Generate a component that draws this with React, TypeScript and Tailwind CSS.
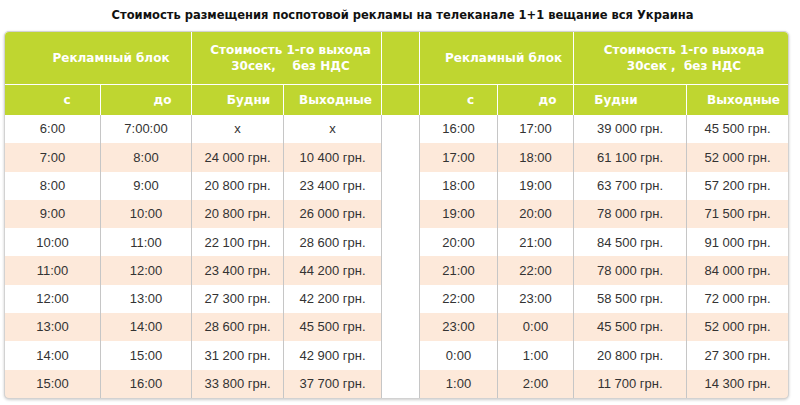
import React from 'react'

type Row = [string, string, string, string, string, string, string, string]

const rows: Row[] = [
  ['6:00', '7:00:00', 'x', 'x', '16:00', '17:00', '39 000 грн.', '45 500 грн.'],
  ['7:00', '8:00', '24 000 грн.', '10 400 грн.', '17:00', '18:00', '61 100 грн.', '52 000 грн.'],
  ['8:00', '9:00', '20 800 грн.', '23 400 грн.', '18:00', '19:00', '63 700 грн.', '57 200 грн.'],
  ['9:00', '10:00', '20 800 грн.', '26 000 грн.', '19:00', '20:00', '78 000 грн.', '71 500 грн.'],
  ['10:00', '11:00', '22 100 грн.', '28 600 грн.', '20:00', '21:00', '84 500 грн.', '91 000 грн.'],
  ['11:00', '12:00', '23 400 грн.', '44 200 грн.', '21:00', '22:00', '78 000 грн.', '84 000 грн.'],
  ['12:00', '13:00', '27 300 грн.', '42 200 грн.', '22:00', '23:00', '58 500 грн.', '72 000 грн.'],
  ['13:00', '14:00', '28 600 грн.', '45 500 грн.', '23:00', '0:00', '45 500 грн.', '52 000 грн.'],
  ['14:00', '15:00', '31 200 грн.', '42 900 грн.', '0:00', '1:00', '20 800 грн.', '27 300 грн.'],
  ['15:00', '16:00', '33 800 грн.', '37 700 грн.', '1:00', '2:00', '11 700 грн.', '14 300 грн.'],
]

// 9 columns, 1px grid lines come from the gap showing the row background
const cols = 'grid grid-cols-[95px_90px_91px_97px_37px_77px_75px_112px_101px] gap-x-px'

const hd = 'flex items-center justify-center text-center font-bold text-white bg-[#bfd630]'
const dc = 'flex items-center justify-center h-[28.3px]'

export default function App() {
  return (
    <div className="w-[800px] h-[405px] bg-white pt-[8px] font-['Liberation_Sans',Arial,sans-serif]">
      <h1 className="text-center text-[11.5px] font-bold text-[#111] leading-[14px] font-['DejaVu_Sans',Verdana,sans-serif] pl-[5px]">
        Стоимость размещения поспотовой рекламы на телеканале 1+1 вещание вся Украина
      </h1>

      <div className="ml-[4px] mt-[9px] w-[785px] rounded-[5px] bg-[#d2d2d2] p-px shadow-[0_1px_3px_rgba(0,0,0,0.2)]">
        <div className="rounded-[4px] overflow-hidden">
          {/* header */}
          <div className="flex flex-col gap-y-px bg-white font-['DejaVu_Sans',Verdana,sans-serif] text-[12px] leading-[16px]">
            <div className={`${cols} h-[52px] bg-white`}>
              <div className={`${hd} col-span-2 pl-[26px]`}>Рекламный блок</div>
              <div className={`${hd} col-span-2 pl-[8px] whitespace-pre`}>
                {'Стоимость 1-го выхода\n30сек,    без НДС'}
              </div>
              <div className={hd}></div>
              <div className={`${hd} col-span-2 pl-[14px]`}>Рекламный блок</div>
              <div className={`${hd} col-span-2 pl-[6px] whitespace-pre`}>
                {'Стоимость 1-го выхода\n30сек ,  без НДС'}
              </div>
            </div>
            <div className={`${cols} h-[30px] bg-white`}>
              <div className={`${hd} pl-[29px]`}>с</div>
              <div className={`${hd} pl-[33px]`}>до</div>
              <div className={`${hd} pl-[22px]`}>Будни</div>
              <div className={`${hd} pl-[6px]`}>Выходные</div>
              <div className={hd}></div>
              <div className={`${hd} pl-[24px]`}>с</div>
              <div className={`${hd} pl-[24px]`}>до</div>
              <div className={`${hd} pr-[28px]`}>Будни</div>
              <div className={`${hd} pl-[12px]`}>Выходные</div>
            </div>
          </div>

          {/* price rows */}
          <div className="text-[13px] text-[#333]">
            {rows.map((r, i) => {
              const bg = i % 2 === 1 ? 'bg-[#fde9da]' : 'bg-white'
              return (
                <div key={i} className={`${cols} bg-[#c6c6c6]`}>
                  <div className={`${dc} ${bg}`}>{r[0]}</div>
                  <div className={`${dc} ${bg}`}>{r[1]}</div>
                  <div className={`${dc} ${bg}`}>{r[2]}</div>
                  <div className={`${dc} ${bg}`}>{r[3]}</div>
                  <div className={`${dc} bg-white`}></div>
                  <div className={`${dc} ${bg}`}>{r[4]}</div>
                  <div className={`${dc} ${bg}`}>{r[5]}</div>
                  <div className={`${dc} ${bg}`}>{r[6]}</div>
                  <div className={`${dc} ${bg}`}>{r[7]}</div>
                </div>
              )
            })}
          </div>
        </div>
      </div>
    </div>
  )
}
